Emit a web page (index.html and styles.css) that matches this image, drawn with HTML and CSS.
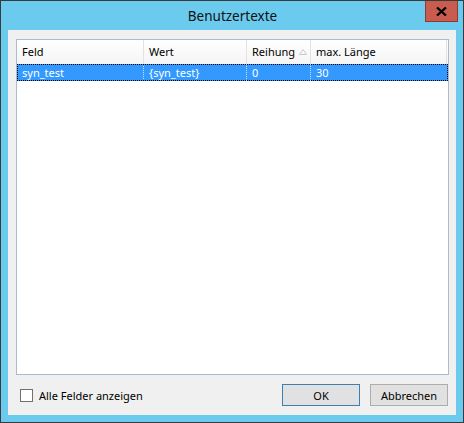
FILE: index.html
```html
<!DOCTYPE html>
<html lang="de">
<head>
<meta charset="UTF-8">
<title>Benutzertexte</title>
<link rel="stylesheet" href="styles.css">
</head>
<body>
<div class="window">
  <div class="titlebar">
    <div></div>
    <div class="title">Benutzertexte</div>
    <div class="controls">
      <button class="close" title="Schließen">
        <svg width="11" height="9" viewBox="0 0 11 9"><path d="M1 0.5 L10 8.5 M10 0.5 L1 8.5" stroke="#000" stroke-width="2.2"/></svg>
      </button>
    </div>
  </div>

  <div class="client">
    <div class="listview">
      <div class="row header">
        <div class="cell">Feld</div>
        <div class="cell">Wert</div>
        <div class="cell">Reihung<svg class="sort" width="8" height="6" viewBox="0 0 8 6"><path d="M0.5 5.5 L4 0.5 L7.5 5.5 Z" fill="none" stroke="#c8c8c8" stroke-width="1"/></svg></div>
        <div class="cell">max. Länge</div>
      </div>
      <div class="row item selected">
        <div class="cell">syn_test</div>
        <div class="cell">{syn_test}</div>
        <div class="cell">0</div>
        <div class="cell">30</div>
      </div>
    </div>

    <div class="footer">
      <label class="check"><span class="box"></span>Alle Felder anzeigen</label>
      <div class="buttons">
        <button class="btn default">OK</button>
        <button class="btn">Abbrechen</button>
      </div>
    </div>
  </div>
</div>
</body>
</html>
```

FILE: styles.css
```css
body {
  margin: 0;
  font-family: "Noto Sans", "Open Sans", sans-serif;
  font-size: 11px;
  color: #000;
  background-color: #f0f0f0;
}
.window {
  width: 464px;
  height: 423px;
  box-sizing: border-box;
  border: 1px solid #3a3a3a;
  background-color: #6acbee;
  display: flex;
  flex-direction: column;
}
.titlebar {
  height: 29px;
  display: grid;
  grid-template-columns: 1fr auto 1fr;
}
.title {
  font-size: 13.5px;
  line-height: 30px;
  color: #111;
  padding-left: 1px;
}
.controls {
  display: flex;
  justify-content: flex-end;
  align-items: flex-start;
  padding-right: 5px;
}
.close {
  width: 33px;
  height: 21px;
  padding: 0;
  border: 1px solid #8c3a33;
  border-top: none;
  background-color: #c75c4f;
  display: flex;
  align-items: center;
  justify-content: center;
}
.client {
  height: 385px;
  margin: 0 7px;
  box-sizing: border-box;
  background-color: #f0f0f0;
  padding: 9px 7px 0 8px;
  display: flex;
  flex-direction: column;
}
.listview {
  height: 336px;
  box-sizing: border-box;
  border: 1px solid #abbccc;
  background-color: #fff;
}
.row {
  display: grid;
  grid-template-columns: 127px 103px 64px 136px;
}
.header {
  height: 24px;
  background: linear-gradient(#ffffff, #f4f4f4);
}
.header .cell {
  border-right: 1px solid #e2e2e2;
  line-height: 24px;
  padding-left: 5px;
  white-space: nowrap;
}
.sort {
  margin-left: 4px;
  vertical-align: 1px;
}
.item {
  height: 17px;
}
.item .cell {
  line-height: 17px;
  padding-left: 5px;
}
.selected {
  background-color: #3399ff;
  color: #fff;
  outline: 1px dotted #000;
  outline-offset: -1px;
}
.selected .cell {
  border-right: 1px dotted #c6e1ff;
}
.selected .cell:last-child {
  border-right: none;
}
.footer {
  display: flex;
  justify-content: space-between;
  align-items: center;
  margin-top: 9px;
  padding-right: 1px;
}
.check {
  display: flex;
  align-items: center;
  padding-left: 4px;
}
.box {
  width: 11px;
  height: 11px;
  border: 1px solid #707070;
  background-color: #fff;
  margin-right: 6px;
}
.buttons {
  display: flex;
  gap: 10px;
}
.btn {
  width: 78px;
  height: 22px;
  padding: 0;
  font-family: inherit;
  font-size: 11px;
  color: #000;
  background-color: #e1e1e1;
  border: 1px solid #adadad;
}
.btn.default {
  border-color: #3c7fb1;
}
```
